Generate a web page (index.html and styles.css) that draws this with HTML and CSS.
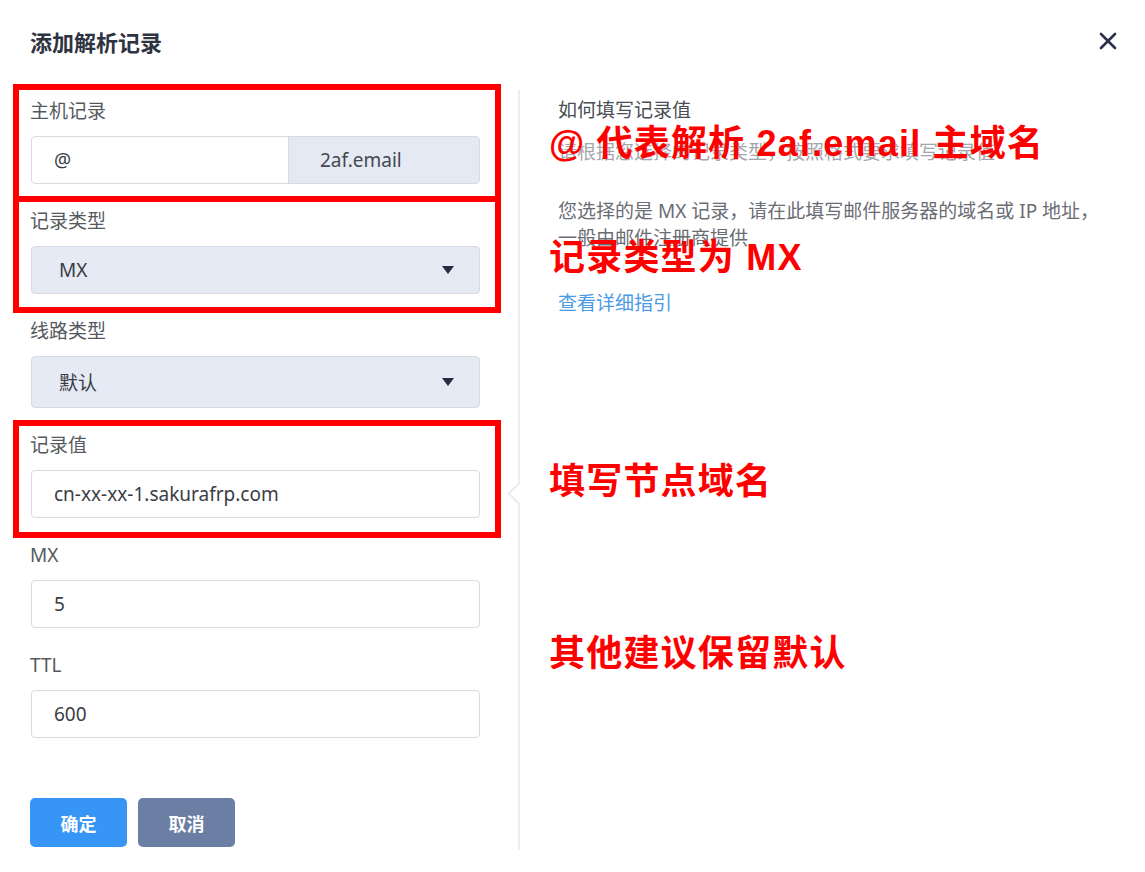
FILE: index.html
```html
<!DOCTYPE html>
<html lang="zh-CN">
<head>
<meta charset="utf-8">
<title>添加解析记录</title>
<link rel="stylesheet" href="styles.css">
</head>
<body>
<div class="dialog">
  <header class="dlg-head">
    <h1 class="dlg-title">添加解析记录</h1>
    <button class="dlg-close" aria-label="关闭">
      <svg width="18" height="18" viewBox="0 0 18 18"><path d="M2 2 L16 16 M16 2 L2 16" stroke="#2b2f4c" stroke-width="2.6" stroke-linecap="round" fill="none"/></svg>
    </button>
  </header>

  <div class="dlg-body">
    <form class="form">
      <div class="field">
        <div class="label">主机记录</div>
        <div class="ctrl ctrl-group">
          <span class="ctrl-text">@</span>
          <span class="addon">2af.email</span>
        </div>
      </div>
      <div class="field">
        <div class="label">记录类型</div>
        <div class="ctrl select select-mx">
          <span class="sel-text">MX</span>
          <span class="caret"></span>
        </div>
      </div>
      <div class="field">
        <div class="label">线路类型</div>
        <div class="ctrl select select-tall">
          <span class="sel-text">默认</span>
          <span class="caret"></span>
        </div>
      </div>
      <div class="field">
        <div class="label">记录值</div>
        <div class="ctrl"><span class="ctrl-text">cn-xx-xx-1.sakurafrp.com</span></div>
      </div>
      <div class="field">
        <div class="label">MX</div>
        <div class="ctrl"><span class="ctrl-text">5</span></div>
      </div>
      <div class="field">
        <div class="label">TTL</div>
        <div class="ctrl"><span class="ctrl-text">600</span></div>
      </div>
      <div class="actions">
        <button type="button" class="btn btn-primary">确定</button>
        <button type="button" class="btn btn-secondary">取消</button>
      </div>
    </form>

    <aside class="help">
      <span class="help-arrow"></span>
      <div class="help-title">如何填写记录值</div>
      <p class="help-hint">请根据您选择的记录类型，按照格式要求填写记录值</p>
      <p class="help-desc">您选择的是 MX 记录，请在此填写邮件服务器的域名或 IP 地址，<br>一般由邮件注册商提供</p>
      <a class="help-link" href="#">查看详细指引</a>
    </aside>
  </div>

  <div class="mark-box mark-1"></div>
  <div class="mark-box mark-2"></div>
  <div class="mark-box mark-3"></div>
  <div class="mark-note note-1">@ 代表解析 2af.email 主域名</div>
  <div class="mark-note note-2">记录类型为 MX</div>
  <div class="mark-note note-3">填写节点域名</div>
  <div class="mark-note note-4">其他建议保留默认</div>
</div>
</body>
</html>
```

FILE: styles.css
```css
* { box-sizing: border-box; }
html, body {
  margin: 0;
  padding: 0;
  background: #ffffff;
}
body {
  font-family: "Noto Sans", "Noto Sans CJK SC", sans-serif;
  color: #333;
  width: 1145px;
  height: 872px;
  overflow: hidden;
}
.dialog {
  position: relative;
  width: 1145px;
  height: 872px;
}
.dlg-head {
  height: 82px;
  display: flex;
  align-items: center;
  justify-content: space-between;
  padding: 0 28px 0 30px;
}
.dlg-title {
  margin: 0;
  font-family: "Noto Sans CJK SC", sans-serif;
  font-size: 22px;
  font-weight: 700;
  line-height: 30px;
  color: #2e3342;
}
.dlg-close {
  border: 0;
  background: none;
  padding: 0;
  width: 18px;
  height: 18px;
  display: flex;
  cursor: pointer;
}
.dlg-body {
  margin-top: 8px;
  display: flex;
  height: 760px;
}
.form {
  width: 480px;
  padding: 8px 0 0 30px;
  margin-right: 38px;
}
.field {
  margin-bottom: 24px;
}
.label {
  font-size: 19px;
  line-height: 26px;
  color: #565a60;
  margin-bottom: 12px;
}
.ctrl {
  height: 48px;
  border: 1px solid #d6dae1;
  border-radius: 4px;
  background: #fff;
  display: flex;
  align-items: center;
  font-size: 19px;
  color: #3a3d45;
  margin-left: 1px;
}
.ctrl-text {
  padding-left: 22px;
  flex: 1;
}
.ctrl-group {
  overflow: hidden;
}
.addon {
  width: 191px;
  height: 100%;
  background: #e4e9f3;
  border-left: 1px solid #d6dae1;
  display: flex;
  align-items: center;
  padding-left: 31px;
  color: #444850;
}
.select {
  background: #e5eaf4;
  justify-content: space-between;
  padding: 0 25px 0 27px;
}
.select-tall {
  height: 52px;
}
.caret {
  width: 0;
  height: 0;
  border-left: 6px solid transparent;
  border-right: 6px solid transparent;
  border-top: 8px solid #262b45;
}
.actions {
  display: flex;
  gap: 11px;
  margin-top: 60px;
}
.btn {
  width: 97px;
  height: 49px;
  border: 0;
  border-radius: 5px;
  color: #fff;
  font-family: "Noto Sans CJK SC", sans-serif;
  font-size: 18px;
  font-weight: 700;
  cursor: pointer;
}
.btn-primary { background: #3795f6; }
.btn-secondary { background: #6a7fa3; }

.help {
  position: relative;
  flex: 1;
  border-left: 2px solid #ededed;
  padding: 7px 20px 0 38px;
  font-size: 19px;
  line-height: 27px;
}
.help-arrow {
  position: absolute;
  left: -9px;
  top: 395px;
  width: 17px;
  height: 17px;
  background: #fff;
  border-left: 2px solid #ececec;
  border-bottom: 2px solid #ececec;
  transform: rotate(45deg);
}
.help-title {
  color: #4a4d55;
}
.help-hint {
  margin: 15px 0 0;
  color: #a3a6ad;
}
.help-desc {
  margin: 32px 0 0;
  color: #6a6d74;
  white-space: nowrap;
}
.help-link {
  display: block;
  margin-top: 38px;
  color: #4a9ae6;
  text-decoration: none;
}

.mark-box {
  position: absolute;
  left: 13px;
  width: 488px;
  border: 6px solid #ff0000;
}
.mark-1 { top: 84px; height: 118px; }
.mark-2 { top: 196px; height: 117px; }
.mark-3 { top: 420px; height: 118px; }

.mark-note {
  position: absolute;
  left: 549px;
  font-family: "Liberation Sans", "Noto Sans CJK SC", sans-serif;
  font-size: 36px;
  font-weight: 700;
  line-height: 44px;
  letter-spacing: 1.2px;
  color: #ff0000;
  white-space: nowrap;
}
.note-1 { top: 122px; }
.note-2 { top: 236px; }
.note-3 { top: 460px; }
.note-4 { top: 632px; }
```
